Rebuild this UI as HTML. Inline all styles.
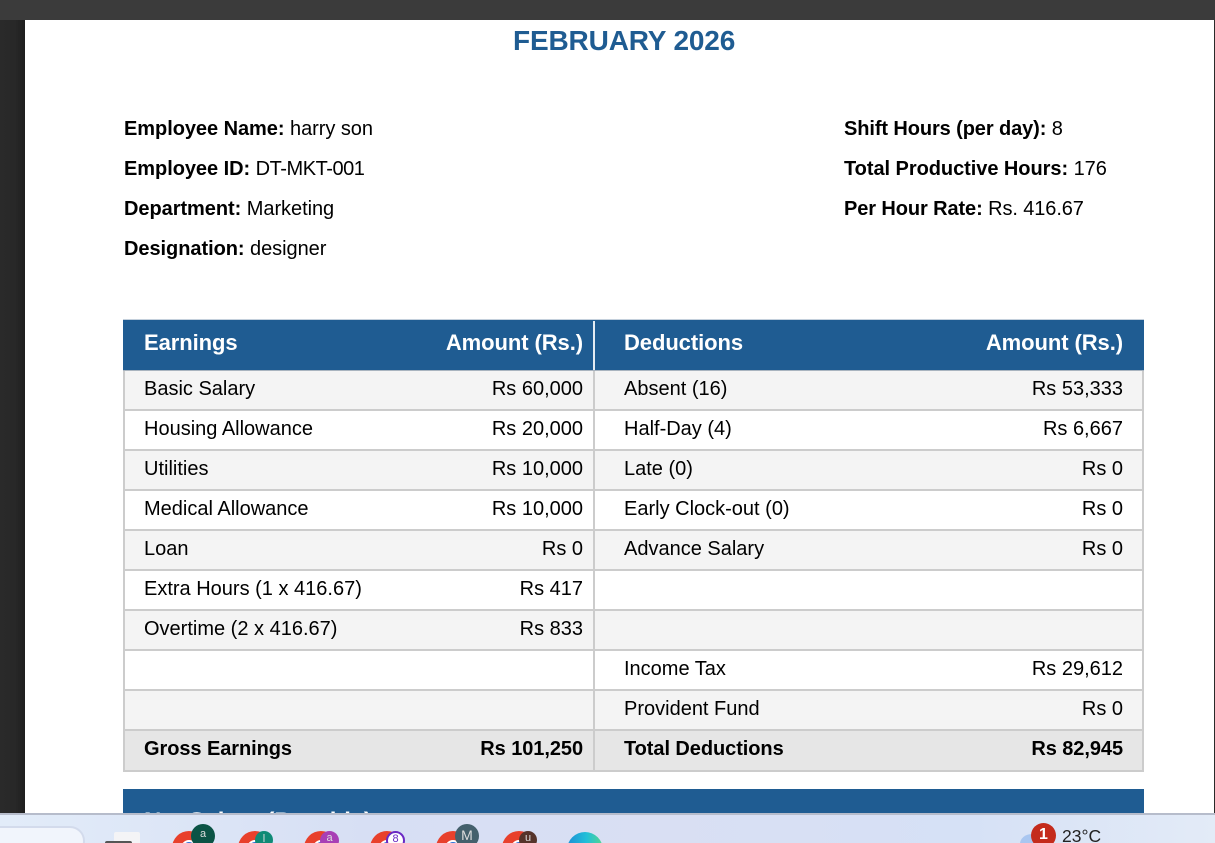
<!DOCTYPE html>
<html><head><meta charset="utf-8">
<style>
html,body{margin:0;padding:0;width:1215px;height:843px;overflow:hidden;background:#fff;font-family:"Liberation Sans",sans-serif;color:#000}
#p{position:relative;width:1215px;height:843px;overflow:hidden;background:#fff}
.a{position:absolute}
.t{position:absolute;white-space:nowrap;font-size:20px;line-height:24px}
.i{letter-spacing:-.05px}
.i2{letter-spacing:-.1px}
.r{text-align:right}
b{font-weight:700}
.bb{font-weight:700;letter-spacing:-.07px}
.row{position:absolute;left:123px;width:1021px;height:40px;box-sizing:border-box;border:2px solid #ccc;border-top:0}
.g{background:#f4f4f4}
.w{background:#fff}
.tot{background:#e6e6e6}
.l{position:absolute;left:468px;top:0;width:2px;height:100%;background:#ccc}
.h{font-size:22px;color:#fff;font-weight:700;letter-spacing:-.08px}
.chrome{position:absolute;width:34px;height:34px;border-radius:50%;top:831px;background:conic-gradient(from -110deg,#e8402c 0 170deg,#f6c02c 170deg 290deg,#34a853 290deg 360deg)}
.chrome:after{content:"";position:absolute;left:9px;top:9px;width:12px;height:12px;border-radius:50%;background:#2a6fdb;border:2px solid #fff}
.bd{position:absolute;border-radius:50%;color:#ddd;text-align:center;font-size:11px}
</style></head><body><div id="p">
<div class="a" style="left:0;top:0;width:1215px;height:20px;background:#3b3b3b"></div>
<div class="a" style="left:0;top:20px;width:25px;height:800px;background:linear-gradient(90deg,#2a2a2a 0,#282828 60%,#1e1e1e 100%)"></div>
<div class="a" style="left:1214px;top:20px;width:1px;height:800px;background:#2a2a2a"></div>

<div class="t" style="left:513px;top:25px;font-size:28px;line-height:32px;font-weight:700;color:#1f5c92;letter-spacing:-.15px">FEBRUARY 2026</div>

<div class="t i" style="left:124px;top:117px"><b>Employee Name:</b> harry son</div>
<div class="t i" style="left:124px;top:157px"><b>Employee ID:</b> <span style="letter-spacing:-.45px">DT-MKT-001</span></div>
<div class="t i" style="left:124px;top:197px"><b>Department:</b> Marketing</div>
<div class="t i" style="left:124px;top:237px"><b>Designation:</b> designer</div>
<div class="t i2" style="left:844px;top:117px"><b>Shift Hours (per day):</b> 8</div>
<div class="t i" style="left:844px;top:157px"><b>Total Productive Hours:</b> 176</div>
<div class="t i2" style="left:844px;top:197px"><b>Per Hour Rate:</b> Rs. 416.67</div>

<div class="a" style="left:123px;top:319px;width:1021px;height:1px;background:#c4d0dc"></div>
<div class="a" style="left:123px;top:320px;width:1021px;height:50px;background:#1f5c92"></div>
<div class="a" style="left:123px;top:370px;width:1021px;height:1px;background:#a9b4bf"></div>
<div class="a" style="left:593px;top:321px;width:2px;height:49px;background:#e4ecf3"></div>
<div class="t h" style="left:144px;top:331px">Earnings</div>
<div class="t h r" style="right:632px;top:331px">Amount (Rs.)</div>
<div class="t h" style="left:624px;top:331px">Deductions</div>
<div class="t h r" style="right:92px;top:331px">Amount (Rs.)</div>

<div class="row g" style="top:371px"><div class="l"></div></div>
<div class="t" style="left:144px;top:377px">Basic Salary</div><div class="t r" style="right:632px;top:377px">Rs 60,000</div><div class="t" style="left:624px;top:377px">Absent (16)</div><div class="t r" style="right:92px;top:377px">Rs 53,333</div>

<div class="row w" style="top:411px"><div class="l"></div></div>
<div class="t" style="left:144px;top:417px">Housing Allowance</div><div class="t r" style="right:632px;top:417px">Rs 20,000</div><div class="t" style="left:624px;top:417px">Half-Day (4)</div><div class="t r" style="right:92px;top:417px">Rs 6,667</div>

<div class="row g" style="top:451px"><div class="l"></div></div>
<div class="t" style="left:144px;top:457px">Utilities</div><div class="t r" style="right:632px;top:457px">Rs 10,000</div><div class="t" style="left:624px;top:457px">Late (0)</div><div class="t r" style="right:92px;top:457px">Rs 0</div>

<div class="row w" style="top:491px"><div class="l"></div></div>
<div class="t" style="left:144px;top:497px">Medical Allowance</div><div class="t r" style="right:632px;top:497px">Rs 10,000</div><div class="t" style="left:624px;top:497px">Early Clock-out (0)</div><div class="t r" style="right:92px;top:497px">Rs 0</div>

<div class="row g" style="top:531px"><div class="l"></div></div>
<div class="t" style="left:144px;top:537px">Loan</div><div class="t r" style="right:632px;top:537px">Rs 0</div><div class="t" style="left:624px;top:537px">Advance Salary</div><div class="t r" style="right:92px;top:537px">Rs 0</div>

<div class="row w" style="top:571px"><div class="l"></div></div>
<div class="t" style="left:144px;top:577px">Extra Hours (1 x 416.67)</div><div class="t r" style="right:632px;top:577px">Rs 417</div>

<div class="row g" style="top:611px"><div class="l"></div></div>
<div class="t" style="left:144px;top:617px">Overtime (2 x 416.67)</div><div class="t r" style="right:632px;top:617px">Rs 833</div>

<div class="row w" style="top:651px"><div class="l"></div></div>
<div class="t" style="left:624px;top:657px">Income Tax</div><div class="t r" style="right:92px;top:657px">Rs 29,612</div>

<div class="row g" style="top:691px"><div class="l"></div></div>
<div class="t" style="left:624px;top:697px">Provident Fund</div><div class="t r" style="right:92px;top:697px">Rs 0</div>

<div class="row tot" style="top:731px;height:41px"><div class="l"></div></div>
<div class="t bb" style="left:144px;top:737px">Gross Earnings</div><div class="t r bb" style="right:632px;top:737px">Rs 101,250</div><div class="t bb" style="left:624px;top:737px">Total Deductions</div><div class="t r bb" style="right:92px;top:737px">Rs 82,945</div>

<div class="a" style="left:123px;top:789px;width:1021px;height:30px;background:#1f5c92"></div>
<div class="t" style="left:144px;top:808px;font-size:24px;line-height:28px;color:#fff;font-weight:700;letter-spacing:-.15px">Net Salary (Payable)</div>

<div class="a" style="left:0;top:813px;width:1215px;height:30px;background:linear-gradient(90deg,#e2ecf9 0,#d7dff4 30%,#d9dff3 55%,#d6e1f6 80%,#e3ebf7 100%);border-top:2px solid #b6bccb;box-sizing:border-box"></div>
<div class="a" style="left:-20px;top:826px;width:105px;height:30px;border-radius:22px;background:#f1f5fc;border:2px solid #d3dbec;box-sizing:border-box"></div>
<div class="a" style="left:114px;top:832px;width:26px;height:11px;background:#f4f4f6;border-radius:2px 2px 0 0"></div>
<div class="a" style="left:105px;top:841px;width:27px;height:2px;background:#555;border-radius:2px 2px 0 0"></div>

<div class="chrome" style="left:172px"></div>
<div class="bd" style="left:191px;top:824px;width:24px;height:24px;background:#0b5345;line-height:20px">a</div>
<div class="chrome" style="left:238px"></div>
<div class="bd" style="left:255px;top:831px;width:18px;height:18px;background:#0f8a76;line-height:16px">l</div>
<div class="chrome" style="left:304px"></div>
<div class="bd" style="left:320px;top:831px;width:19px;height:19px;background:#a83fb5;line-height:15px">a</div>
<div class="chrome" style="left:370px"></div>
<div class="bd" style="left:386px;top:831px;width:19px;height:19px;background:#fff;border:2px solid #6a28c4;box-sizing:border-box;color:#6a28c4;line-height:13px">8</div>
<div class="chrome" style="left:436px"></div>
<div class="bd" style="left:455px;top:824px;width:24px;height:24px;background:#44606c;line-height:22px;font-size:14px">M</div>
<div class="chrome" style="left:502px"></div>
<div class="bd" style="left:519px;top:831px;width:18px;height:18px;background:#56342b;line-height:15px">u</div>
<div class="a" style="left:567px;top:832px;width:36px;height:36px;border-radius:50%;background:linear-gradient(90deg,#1c8fd6,#22c0d8 55%,#55d68e)"></div>

<div class="a" style="left:1020px;top:834px;width:24px;height:20px;border-radius:50%;background:#a9c6f0"></div>
<div class="a" style="left:1031px;top:823px;width:25px;height:25px;border-radius:50%;background:#c42b1c;color:#fff;text-align:center;font-size:16px;line-height:23px;font-weight:700">1</div>
<div class="t" style="left:1062px;top:824px;font-size:17.5px;line-height:24px;color:#222">23°C</div>
</div></body></html>
